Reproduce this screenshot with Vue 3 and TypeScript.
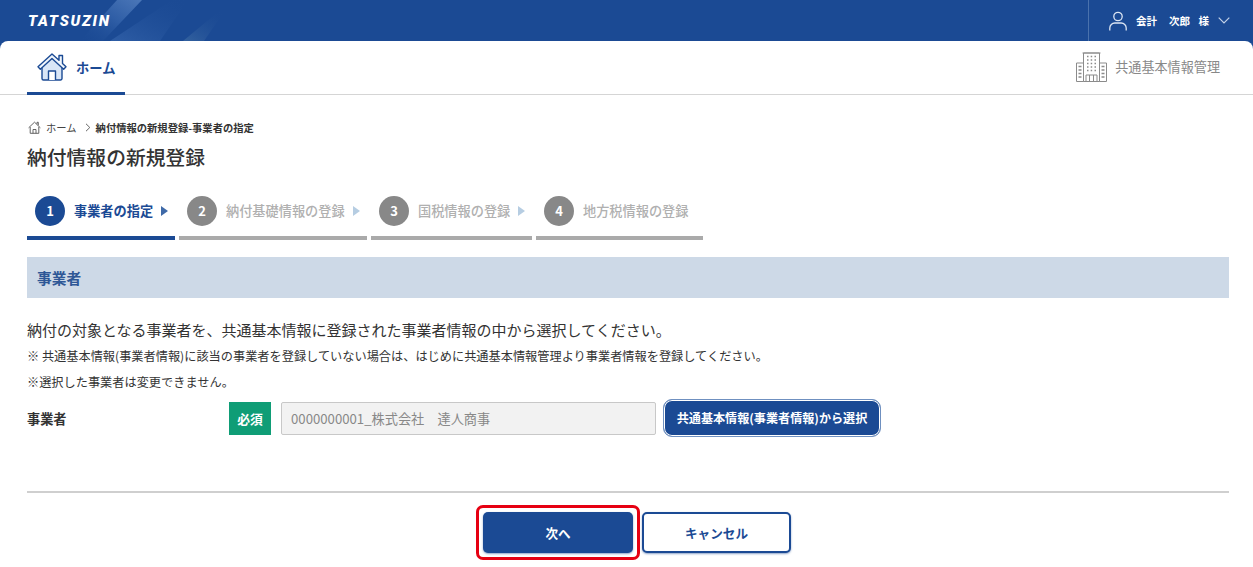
<script setup lang="ts">
interface Step { no: number; label: string; width: number; active?: boolean; arrow: boolean }
const steps: Step[] = [
  { no: 1, label: '事業者の指定', width: 148, active: true, arrow: true },
  { no: 2, label: '納付基礎情報の登録', width: 188, arrow: true },
  { no: 3, label: '国税情報の登録', width: 161, arrow: true },
  { no: 4, label: '地方税情報の登録', width: 167, arrow: false },
]
</script>

<template>
  <div class="page">
    <header class="topbar">
      <svg class="decor" width="300" height="41" viewBox="0 0 300 41" aria-hidden="true">
        <defs>
          <linearGradient id="g1" x1="0" y1="1" x2="1" y2="0">
            <stop offset="0" stop-color="#1b4a94" stop-opacity="0" />
            <stop offset=".55" stop-color="#2f5ea6" />
            <stop offset="1" stop-color="#4b77b8" />
          </linearGradient>
          <linearGradient id="g2" x1="0" y1="1" x2="1" y2="0">
            <stop offset="0" stop-color="#2f5ea6" />
            <stop offset="1" stop-color="#1b4a94" stop-opacity="0" />
          </linearGradient>
          <linearGradient id="g3" x1="0" y1="1" x2="1" y2="0">
            <stop offset="0" stop-color="#34629f" />
            <stop offset="1" stop-color="#1b4a94" stop-opacity="0" />
          </linearGradient>
        </defs>
        <polygon points="117,0 142,0 103,41 80,41" fill="url(#g1)" />
        <polygon points="110,41 172,0 188,0 160,41" fill="url(#g2)" />
        <polygon points="183,41 218,12 224,12 204,41" fill="url(#g3)" />
      </svg>
      <div class="logo">TATSUZIN</div>
      <div class="user">
        <svg width="20" height="20" viewBox="0 0 20 20" fill="none" stroke="#dbe5f3" stroke-width="1.3">
          <circle cx="10" cy="5.5" r="4.2" />
          <path d="M1.800 19.500V17a5 5 0 0 1 5-5h6.400a5 5 0 0 1 5 5v2.500" />
        </svg>
        <span class="user-role">会計</span>
        <span class="user-name">次郎 様</span>
        <svg width="12" height="7" viewBox="0 0 12 7" fill="none" stroke="#c3d2e8" stroke-width="1.2">
          <path d="M.7.7 6 6l5.300-5.300" />
        </svg>
      </div>
    </header>

    <div class="sheet">
      <nav class="nav">
        <a class="home-tab">
          <svg width="30" height="28" viewBox="0 0 30 28" fill="none" stroke="#1b4a94" stroke-width="1.4" stroke-linejoin="round">
            <path d="M5 13v12.500A1.500 1.500 0 0 0 6.500 27h17a1.500 1.500 0 0 0 1.500-1.500V13L15 4z" fill="#d9e6f7" />
            <path d="M15 1l7 6.300V2.500h3.500v8L29 13.800l-2.300 2.400L15 5.600 3.300 16.200 1 13.800z" fill="#f1f6fc" />
            <path d="M11.500 27v-9h7v9" fill="#fff" />
          </svg>
          <span>ホーム</span>
        </a>
        <a class="master">
          <svg width="31" height="30" viewBox="0 0 31 30" fill="none" stroke="#8b8b8b" stroke-width="1">
            <path d="M.5 11h7v18.500h-7zM23.500 11h7v18.500h-7zM7.500 1h16v28.500h-16z" />
            <path d="M6.500 1h18" />
            <path d="M11 4.500h1.500M14.700 4.500h1.500M18.500 4.500H20M11 8h1.500M14.700 8h1.500M18.500 8H20M11 11.500h1.500M14.700 11.500h1.500M18.500 11.500H20M11 15h1.500M14.700 15h1.500M18.500 15H20M11 18.500h1.500M14.700 18.500h1.500M18.500 18.500H20" stroke-width="1.600" />
            <path d="M2.500 14.500h3M2.500 18h3M2.500 21.500h3M2.500 25h3M25.500 14.500h3M25.500 18h3M25.500 21.500h3M25.500 25h3" stroke-width="1.400" />
            <path d="M10 29.500V23h11v6.500M13.500 23v6.500M17.500 23v6.500" />
          </svg>
          <span>共通基本情報管理</span>
        </a>
      </nav>

      <main class="content">
        <div class="crumbs">
          <svg width="13" height="13" viewBox="0 0 13 13" fill="none" stroke="#555" stroke-width=".9">
            <path d="M2.200 6v6.300h8.600V6M.6 6.800 6.500 1.200l5.900 5.600M5 12.300V8.500h3v3.800M9 3V1.300h1.300v3" />
          </svg>
          <span class="crumb-home">ホーム</span>
          <svg width="6" height="9" viewBox="0 0 6 9" fill="none" stroke="#555" stroke-width=".9"><path d="m1 .8 3.800 3.700L1 8.200" /></svg>
          <span class="crumb-current">納付情報の新規登録-事業者の指定</span>
        </div>
        <h1>納付情報の新規登録</h1>

        <ol class="steps">
          <li v-for="s in steps" :key="s.no" class="step" :class="{ active: s.active }" :style="{ width: s.width + 'px' }">
            <span class="num">{{ s.no }}</span>
            <span class="label">{{ s.label }}</span>
            <i v-if="s.arrow" class="tri"></i>
          </li>
        </ol>

        <h2>事業者</h2>

        <p class="lead">納付の対象となる事業者を、共通基本情報に登録された事業者情報の中から選択してください。</p>
        <p class="note first">※ 共通基本情報(事業者情報)に該当の事業者を登録していない場合は、はじめに共通基本情報管理より事業者情報を登録してください。</p>
        <p class="note">※選択した事業者は変更できません。</p>

        <div class="field">
          <span class="field-label">事業者</span>
          <span class="req">必須</span>
          <input class="input" type="text" value="0000000001_株式会社　達人商事" readonly />
          <button class="select" type="button">共通基本情報(事業者情報)から選択</button>
        </div>

        <div class="actions">
          <span class="highlight"><button class="next" type="button">次へ</button></span>
          <button class="cancel" type="button">キャンセル</button>
        </div>
      </main>
    </div>
  </div>
</template>

<style>
html, body { margin: 0; background: #fff; overflow: hidden; }
</style>

<style scoped>
* { box-sizing: border-box; }
.page {
  width: 1253px;
  height: 567px;
  overflow: hidden;
  background: #1b4a94;
  font-family: "Noto Sans CJK JP", "Noto Sans", sans-serif;
  color: #333;
}
.topbar {
  position: relative;
  height: 41px;
  display: flex;
  align-items: center;
  justify-content: space-between;
  background: #1b4a94;
}
.decor { position: absolute; left: 0; top: 0; }
.logo {
  position: relative;
  margin-left: 28px;
  color: #fff;
  font: italic 900 15px "Roboto", sans-serif;
  letter-spacing: 1.750px;
}
.user {
  align-self: stretch;
  width: 165px;
  border-left: 1px solid #4a72ad;
  display: flex;
  align-items: center;
  padding-left: 19px;
  color: #fff;
  font-size: 10.500px;
  font-weight: 700;
}
.user-role { margin-left: 8px; }
.user-name { margin-left: 12px; margin-right: 9px; white-space: pre; word-spacing: 6px; }
.sheet {
  height: 526px;
  background: #fff;
  border-radius: 8px 8px 0 0;
}
.nav {
  height: 54px;
  display: flex;
  align-items: flex-start;
  justify-content: space-between;
  padding: 0 33px 0 27px;
  border-bottom: 1px solid #d5d5d5;
}
.home-tab {
  width: 98px;
  height: 54px;
  display: flex;
  align-items: center;
  gap: 9px;
  padding: 1px 0 0 10px;
  border-bottom: 3px solid #1b4a94;
  color: #1b4a94;
  font-size: 13.300px;
  font-weight: 700;
}
.master {
  display: flex;
  align-items: center;
  gap: 8px;
  height: 51px;
  color: #888;
  font-size: 13.100px;
}
.content { padding: 0 24px 0 27px; }
.crumbs {
  display: flex;
  align-items: center;
  height: 14px;
  margin-top: 25px;
  font-size: 10.300px;
  padding-left: 1px;
}
.crumb-home { margin: 0 8px 0 5px; color: #444; }
.crumb-current { margin-left: 5px; font-weight: 700; color: #333; }
h1 {
  margin: 8px 0 0;
  height: 30px;
  font-size: 19.800px;
  line-height: 30px;
  font-weight: 500;
  color: #333;
}
.steps {
  display: flex;
  gap: 4px;
  margin: 24px 0 0;
  padding: 0;
  list-style: none;
}
.step {
  height: 44px;
  display: flex;
  align-items: flex-start;
  padding: 0 0 0 8px;
  border-bottom: 4px solid #aaa;
  color: #b0b0b0;
  font-size: 13.200px;
  line-height: 30px;
  font-weight: 500;
}
.step.active { border-bottom-color: #1b4a94; color: #1b4a94; font-weight: 700; }
.num {
  width: 30px;
  height: 30px;
  flex: none;
  display: flex;
  align-items: center;
  justify-content: center;
  margin-right: 9px;
  border-radius: 50%;
  background: #888;
  color: #fff;
  font-size: 13px;
  font-weight: 700;
}
.active .num { background: #1b4a94; }
.tri {
  width: 0;
  height: 0;
  margin: 9.500px 0 0 8px;
  border-left: 7px solid #b6cde2;
  border-top: 5.500px solid transparent;
  border-bottom: 5.500px solid transparent;
}
.active .tri { border-left-color: #3f6aa8; }
h2 {
  margin: 17px 0 0;
  height: 41px;
  padding-left: 10px;
  background: #cdd9e7;
  color: #2e5796;
  font-size: 14.700px;
  line-height: 41px;
  font-weight: 700;
}
.lead {
  margin: 21px 0 0;
  height: 22px;
  font-size: 15px;
  line-height: 22px;
}
.note {
  margin: 0;
  height: 26px;
  font-size: 12.200px;
  line-height: 26px;
  white-space: nowrap;
}
.note.first { margin-top: 2px; }
.field {
  display: flex;
  align-items: center;
  margin-top: 5px;
  height: 36px;
}
.field-label {
  width: 202px;
  font-size: 13.200px;
  font-weight: 700;
}
.req {
  width: 42px;
  height: 33px;
  display: flex;
  align-items: center;
  justify-content: center;
  background: #0f9d76;
  color: #fff;
  font-size: 12.800px;
  font-weight: 700;
}
.input {
  width: 375px;
  height: 33px;
  margin-left: 10px;
  padding: 0 9px;
  border: 1px solid #c8c8c8;
  border-radius: 2px;
  outline: none;
  background: #f2f2f2;
  color: #888;
  font: 13.200px "Noto Sans CJK JP", sans-serif;
}
.select {
  width: 218px;
  height: 38px;
  margin-left: 7px;
  margin-bottom: 1px;
  padding: 0;
  border: 1px solid #6f90c0;
  border-radius: 9px;
  background: #1b4a94;
  box-shadow: inset 0 0 0 1px #fff;
  color: #fff;
  font: 700 12.100px "Noto Sans CJK JP", sans-serif;
  white-space: nowrap;
}
.actions {
  display: flex;
  justify-content: center;
  align-items: center;
  gap: 2px;
  margin-top: 55px;
  padding: 12px 0 0 11px;
  border-top: 2px solid #cfcfcf;
}
.highlight {
  display: flex;
  padding: 4px;
  border: 3px solid #e60012;
  border-radius: 7px;
}
.next, .cancel {
  width: 150px;
  height: 41px;
  border-radius: 5px;
  font: 700 12.600px "Noto Sans CJK JP", sans-serif;
  box-shadow: 0 1px 2px rgba(27, 74, 148, .5);
}
.next { border: 0; background: #1b4a94; color: #fff; }
.cancel { width: 149px; border: 2px solid #1b4a94; background: #fff; color: #1b4a94; }
</style>
